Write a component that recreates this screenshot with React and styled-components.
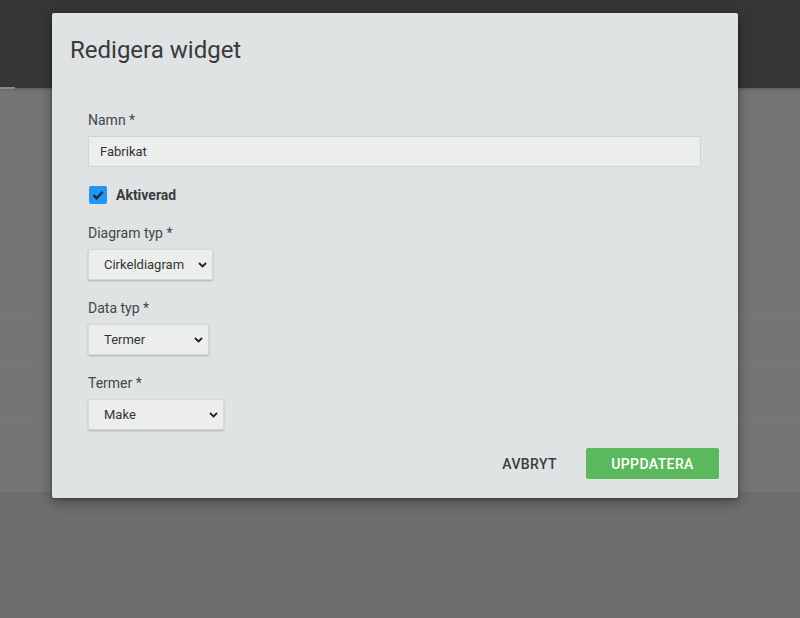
import React from "react"
import styled, { createGlobalStyle } from "styled-components"

const GlobalStyle = createGlobalStyle`
* { box-sizing: border-box; }
html, body { margin: 0; padding: 0; }
body {
    font-family: Roboto, "Noto Sans", "Liberation Sans", sans-serif;
    background: #6e6e6e;
    width: 800px;
    height: 618px;
    overflow: hidden;
}
`

function Chevron() {
    return (
        <svg width="9" height="6" viewBox="0 0 9 6">
            <path d="M1 1 L4.5 4.5 L8 1" fill="none" stroke="#222" strokeWidth="1.8" />
        </svg>
    )
}

function Check() {
    return (
        <svg width="14" height="14" viewBox="0 0 14 14">
            <path d="M2.5 7.2 L5.6 10.2 L11.6 3.8" fill="none" stroke="#1f2a33" strokeWidth="2.4" />
        </svg>
    )
}

function SelectField({ label, value, options, width }) {
    return (
        <Field>
            <Label>{label}</Label>
            <SelectWrap width={width}>
                <Select defaultValue={value}>
                    {options.map((o) => <option key={o}>{o}</option>)}
                </Select>
                <Arrow><Chevron /></Arrow>
            </SelectWrap>
        </Field>
    )
}

export default function App() {
    return (
        <>
            <GlobalStyle />
            <Page>
                <Header>
                    <Tab />
                </Header>
                <Panel>
                    <PanelRow height={227} />
                    <PanelRow height={52} />
                    <PanelRow height={53} />
                    <PanelRow height={73} last />
                </Panel>
            </Page>
            <Backdrop>
                <Modal>
                    <Title>Redigera widget</Title>
                    <Form>
                        <Field>
                            <Label>Namn *</Label>
                            <TextInput defaultValue="Fabrikat" />
                        </Field>
                        <CheckRow>
                            <CheckBox><Check /></CheckBox>
                            <CheckLabel>Aktiverad</CheckLabel>
                        </CheckRow>
                        <SelectField label="Diagram typ *" value="Cirkeldiagram" options={["Cirkeldiagram", "Stapeldiagram"]} width={125} />
                        <SelectField label="Data typ *" value="Termer" options={["Termer", "Datum"]} width={121} />
                        <SelectField label="Termer *" value="Make" options={["Make", "Modell"]} width={136} />
                    </Form>
                    <Actions>
                        <TextButton>AVBRYT</TextButton>
                        <PrimaryButton>UPPDATERA</PrimaryButton>
                    </Actions>
                </Modal>
            </Backdrop>
        </>
    )
}

const Page = styled.div`
width: 800px;
height: 618px;
display: flex;
flex-direction: column;
`
const Header = styled.div`
height: 88px;
background: #363636;
position: relative;
box-shadow: 0 1px 3px rgba(0,0,0,0.25);
z-index: 1;
`
const Tab = styled.div`
position: absolute;
left: 0;
bottom: -1px;
width: 15px;
height: 2px;
background: #8a8a8a;
`
const Panel = styled.div`
background: #757575;
display: flex;
flex-direction: column;
height: 405px;
border-bottom: 1px solid #6a6a6a;
`
const PanelRow = styled.div`
height: ${(p) => p.height}px;
border-bottom: ${(p) => (p.last ? "none" : "1px solid #797979")};
`
const Backdrop = styled.div`
position: absolute;
inset: 0;
z-index: 5;
padding: 13px 0 0 52px;
`
const Modal = styled.div`
width: 686px;
height: 485px;
background: #dfe3e3;
border-radius: 2px;
box-shadow: 0 4px 14px rgba(0,0,0,0.35), 0 1px 3px rgba(0,0,0,0.3);
padding: 23px 18px 19px 18px;
display: flex;
flex-direction: column;
`
const Title = styled.h1`
margin: 0;
font-size: 24px;
font-weight: 400;
line-height: 28px;
color: #383a3b;
`
const Form = styled.div`
display: flex;
flex-direction: column;
padding: 0 18px;
margin-top: 46px;
gap: 18px;
flex: 1;
`
const Field = styled.div`
display: flex;
flex-direction: column;
gap: 6px;
`
const Label = styled.label`
font-size: 14px;
line-height: 20px;
color: #444749;
`
const TextInput = styled.input`
width: 613px;
height: 31px;
background: #eceeed;
border: 1px solid #d1d4d4;
border-radius: 1px;
padding: 0 11px;
font-family: inherit;
font-size: 13px;
color: #333;
outline: none;
`
const CheckRow = styled.div`
display: flex;
align-items: center;
gap: 9px;
margin: 1px 0 1px 1px;
height: 18px;
`
const CheckBox = styled.span`
width: 18px;
height: 18px;
border-radius: 2px;
background: #2196f3;
display: flex;
align-items: center;
justify-content: center;
`
const CheckLabel = styled.span`
font-size: 14px;
font-weight: 700;
color: #3a3c3e;
`
const SelectWrap = styled.div`
position: relative;
width: ${(p) => p.width}px;
height: 31px;
`
const Select = styled.select`
appearance: none;
width: 100%;
height: 100%;
background: #eceeed;
border: 1px solid #d6d8d8;
border-radius: 1px;
box-shadow: 0 1px 2px rgba(0,0,0,0.22);
padding: 0 0 0 15px;
font-family: inherit;
font-size: 13px;
color: #333;
outline: none;
`
const Arrow = styled.span`
position: absolute;
right: 6px;
top: 13px;
display: flex;
pointer-events: none;
`
const Actions = styled.div`
display: flex;
justify-content: flex-end;
align-items: center;
gap: 29px;
padding-right: 1px;
`
const TextButton = styled.button`
background: none;
border: none;
padding: 0;
font-family: inherit;
font-size: 14px;
font-weight: 500;
letter-spacing: 0.4px;
color: #3a3c3e;
`
const PrimaryButton = styled.button`
width: 133px;
height: 31px;
background: #5cb85c;
border: none;
border-radius: 2px;
color: #fff;
font-family: inherit;
font-size: 14px;
font-weight: 500;
letter-spacing: 0.4px;
`
